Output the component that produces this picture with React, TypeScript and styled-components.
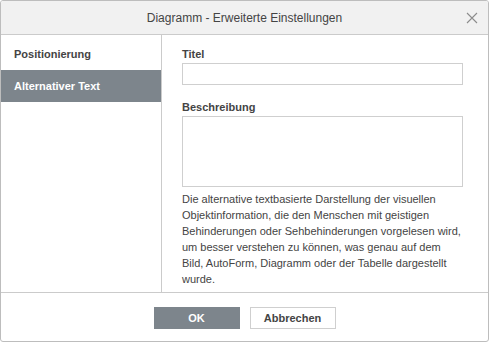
import styled, { createGlobalStyle } from 'styled-components';

const GlobalStyle = createGlobalStyle`
  html, body {
    margin: 0;
    padding: 0;
    background: #ffffff;
  }
  * {
    box-sizing: border-box;
  }
`;

const menu = ['Positionierung', 'Alternativer Text'];

export default function App() {
  const active = 1;

  return (
    <>
      <GlobalStyle />
      <Dialog>
        <Header>
          <Title>Diagramm - Erweiterte Einstellungen</Title>
          <CloseButton aria-label='Schließen'>
            <svg width='12' height='12' viewBox='0 0 12 12'>
              <path d='M1 1 L11 11 M11 1 L1 11' stroke='#8c8c8c' strokeWidth='1.1' fill='none' />
            </svg>
          </CloseButton>
        </Header>

        <Body>
          <Sidebar>
            {menu.map((item, i) => (
              <MenuItem key={`menu-${item}`} $active={i === active}>
                {item}
              </MenuItem>
            ))}
          </Sidebar>

          <Content>
            <Label>Titel</Label>
            <TextInput />
            <Label $top={15}>Beschreibung</Label>
            <TextArea />
            <Hint>
              Die alternative textbasierte Darstellung der visuellen Objektinformation, die den Menschen mit
              geistigen Behinderungen oder Sehbehinderungen vorgelesen wird, um besser verstehen zu können, was
              genau auf dem Bild, AutoForm, Diagramm oder der Tabelle dargestellt wurde.
            </Hint>
          </Content>
        </Body>

        <Footer>
          <Button $primary>OK</Button>
          <Button>Abbrechen</Button>
        </Footer>
      </Dialog>
    </>
  );
}

const Dialog = styled.div`
  width: 489px;
  height: 342px;
  border: 1px solid #bdbdbd;
  border-radius: 3px;
  display: flex;
  flex-direction: column;
  background: #ffffff;
  font-family: 'Liberation Sans', Arial, sans-serif;
  color: #444444;
  overflow: hidden;
`;

const Header = styled.div`
  height: 34px;
  flex: none;
  background: #f1f1f1;
  border-bottom: 1px solid #cbcbcb;
  display: flex;
  align-items: center;
  justify-content: center;
  position: relative;
`;

const Title = styled.div`
  font-size: 12px;
  color: #444444;
`;

const CloseButton = styled.div`
  position: absolute;
  right: 10px;
  top: 11px;
  width: 12px;
  height: 12px;
  display: flex;
`;

const Body = styled.div`
  height: 258px;
  flex: none;
  display: flex;
  border-bottom: 1px solid #cbcbcb;
`;

const Sidebar = styled.div`
  width: 161px;
  flex: none;
  border-right: 1px solid #cbcbcb;
  padding-top: 3px;
  display: flex;
  flex-direction: column;
`;

const MenuItem = styled.div<{ $active?: boolean }>`
  height: 32px;
  display: flex;
  align-items: center;
  padding-left: 13px;
  font-size: 11px;
  font-weight: bold;
  background: ${(p) => (p.$active ? '#7d858c' : 'transparent')};
  color: ${(p) => (p.$active ? '#ffffff' : '#444444')};
`;

const Content = styled.div`
  flex: 1;
  padding: 12px 26px 0 20px;
  display: flex;
  flex-direction: column;
`;

const Label = styled.div<{ $top?: number }>`
  font-size: 11px;
  font-weight: bold;
  line-height: 14px;
  margin-top: ${(p) => p.$top ?? 0}px;
  margin-bottom: 2px;
`;

const TextInput = styled.div`
  width: 281px;
  height: 22px;
  border: 1px solid #cfcfcf;
  background: #ffffff;
`;

const TextArea = styled.div`
  width: 281px;
  height: 71px;
  border: 1px solid #cfcfcf;
  background: #ffffff;
`;

const Hint = styled.div`
  margin-top: 4px;
  width: 281px;
  font-size: 11px;
  line-height: 16px;
  color: #444444;
`;

const Footer = styled.div`
  flex: 1;
  display: flex;
  justify-content: center;
  align-items: flex-start;
  gap: 10px;
  padding-top: 14px;
`;

const Button = styled.div<{ $primary?: boolean }>`
  width: 86px;
  height: 22px;
  display: flex;
  align-items: center;
  justify-content: center;
  font-size: 11px;
  font-weight: bold;
  background: ${(p) => (p.$primary ? '#7d858c' : '#ffffff')};
  color: ${(p) => (p.$primary ? '#ffffff' : '#444444')};
  border: 1px solid ${(p) => (p.$primary ? '#7d858c' : '#cfcfcf')};
`;
